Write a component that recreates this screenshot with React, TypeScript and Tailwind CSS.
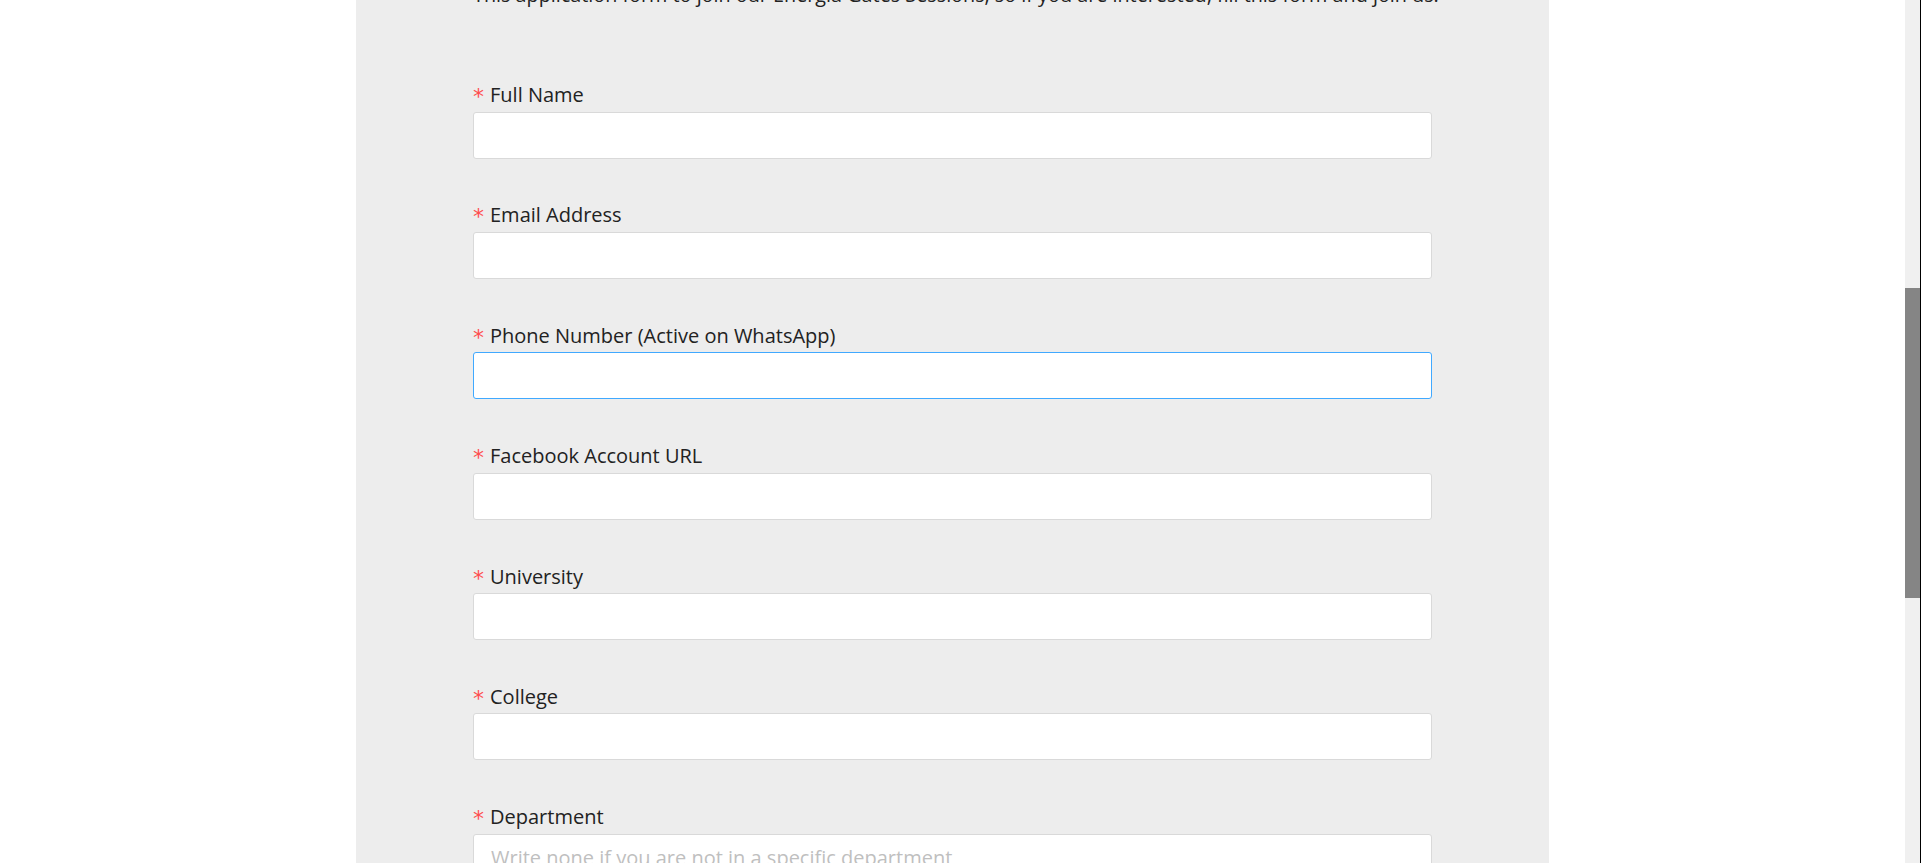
const fields = [
  { label: 'Full Name' },
  { label: 'Email Address' },
  { label: 'Phone Number (Active on WhatsApp)', focused: true },
  { label: 'Facebook Account URL' },
  { label: 'University' },
  { label: 'College' },
  { label: 'Department', placeholder: 'Write none if you are not in a specific department' },
];

function Field({ label, placeholder, focused }: { label: string; placeholder?: string; focused?: boolean }) {
  return (
    <div className="mb-[42.9px]">
      <label className="flex items-center h-[28px] mb-[2.5px] text-[20px] leading-[28px] text-[#222]">
        <span className="w-[17px] text-[22px] text-[#ff4d4f] font-['DejaVu_Sans',sans-serif] leading-none translate-y-[2px]">*</span>
        {label}
      </label>
      <input
        type="text"
        placeholder={placeholder}
        className={`block w-full h-[47px] px-[17px] rounded-[3px] bg-white border text-[20px] text-[#222] outline-none placeholder:text-[#bfbfbf] ${
          focused ? 'border-[#40a9ff]' : 'border-[#d9d9d9]'
        }`}
      />
    </div>
  );
}

export default function App() {
  return (
    <div className="flex h-[863px] overflow-hidden bg-white font-['Open_Sans',sans-serif]">
      <main className="flex-1">
        <div className="flex flex-col w-[1193px] min-h-[900px] mx-auto bg-[#ededed] px-[117px]">
          {/* intro text, page is scrolled so only its bottom shows */}
          <p className="-mt-[19px] mb-[72px] text-center text-[19.8px] leading-[28px] text-[#222] whitespace-nowrap">
            This application form to join our Energia Gates Sessions, so if you are interested, fill this form and join us.
          </p>
          <form>
            {fields.map((f) => (
              <Field key={f.label} {...f} />
            ))}
          </form>
        </div>
      </main>

      {/* scrollbar */}
      <div className="w-[15px] bg-[#f0f0f0] pt-[288px]">
        <div className="h-[310px] bg-[#858585]" />
      </div>
      <div className="w-px bg-black" />
    </div>
  );
}
